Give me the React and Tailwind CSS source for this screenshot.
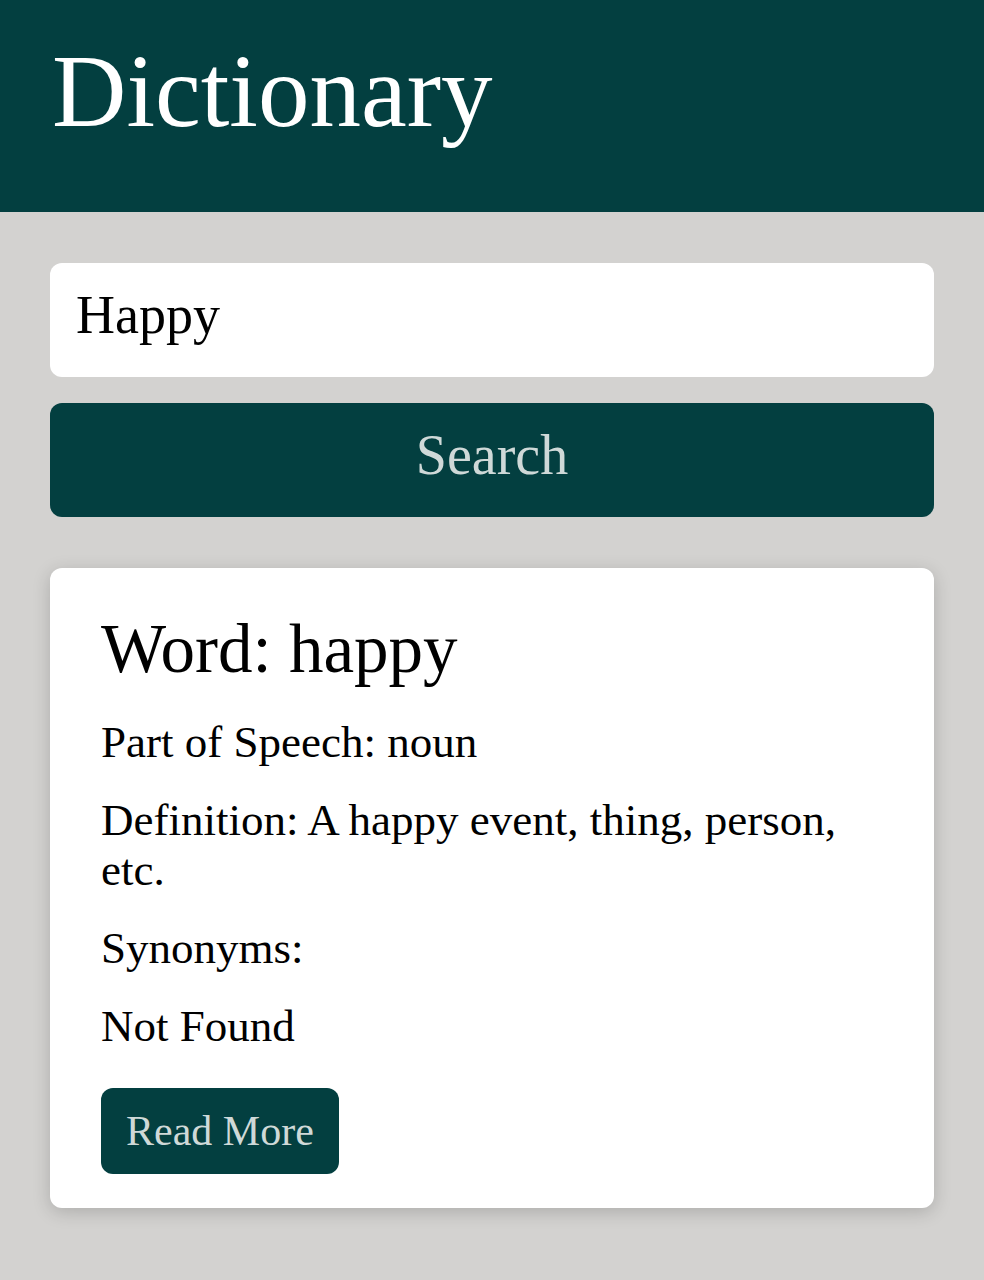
import React, { useState } from 'react';

const SERIF = { fontFamily: '"Liberation Serif", "DejaVu Serif", serif' };

export default function App() {
  const [query, setQuery] = useState('Happy');

  return (
    <div className="min-h-screen bg-[#d3d2d0]" style={SERIF}>
      <header className="h-[212px] bg-[#033f40] px-[52px] pt-[40px]">
        <h1 className="text-[103px] leading-none text-white">Dictionary</h1>
      </header>

      <main className="px-[50px] pt-[51px] pb-[60px]">
        <input
          value={query}
          onChange={(e) => setQuery(e.target.value)}
          className="block h-[114px] w-full rounded-xl bg-white px-[26px] pb-[10px] text-[54px] text-black outline-none"
        />
        <button className="mt-[26px] block h-[114px] w-full rounded-xl bg-[#033f40] pb-[10px] text-[56px] text-[#cfd9d8]">
          Search
        </button>

        <section className="mt-[51px] rounded-xl bg-white px-[51px] pt-[47px] pb-[34px] shadow-[0_4px_18px_rgba(0,0,0,0.18)]">
          <h2 className="text-[69px] leading-none text-black">Word: happy</h2>
          <div className="mt-[33px] flex flex-col gap-[28px] text-[45px] leading-[50px] text-black">
            <p>Part of Speech: noun</p>
            <p>Definition: A happy event, thing, person, etc.</p>
            <p>Synonyms:</p>
            <p>Not Found</p>
          </div>
          <button className="mt-[37px] h-[86px] rounded-xl bg-[#033f40] px-[25px] text-[42px] text-[#cfd9d8]">
            Read More
          </button>
        </section>
      </main>
    </div>
  );
}
